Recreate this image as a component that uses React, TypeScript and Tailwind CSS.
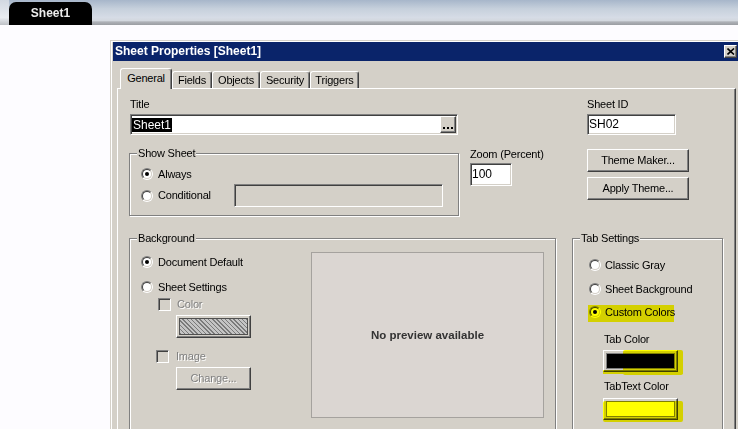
import React from "react";

const raised =
  "border border-t-white border-l-white border-b-[#404040] border-r-[#404040] shadow-[inset_-1px_-1px_0_#808080]";
const sunken =
  "border border-t-[#808080] border-l-[#808080] border-b-white border-r-white shadow-[inset_1px_1px_0_#404040,inset_-1px_-1px_0_#d4d0c8]";
const disabledText = "text-[#808080] [text-shadow:1px_1px_0_#ffffff]";

function Radio({ checked = false }: { checked?: boolean }) {
  return (
    <span className="flex h-[12px] w-[12px] shrink-0 items-center justify-center rounded-full border border-t-[#808080] border-l-[#808080] border-b-white border-r-white">
      <span className="flex h-[10px] w-[10px] items-center justify-center rounded-full border border-t-[#404040] border-l-[#404040] border-b-[#d4d0c8] border-r-[#d4d0c8] bg-white">
        {checked && <span className="h-[4px] w-[4px] rounded-full bg-black" />}
      </span>
    </span>
  );
}

function Check() {
  return <span className={`block h-[13px] w-[13px] shrink-0 bg-[#d4d0c8] ${sunken}`} />;
}

function Group({
  label,
  className,
  children,
}: {
  label: string;
  className: string;
  children?: React.ReactNode;
}) {
  return (
    <div
      className={`relative border border-[#808080] shadow-[inset_1px_1px_0_#ffffff,1px_1px_0_#ffffff] ${className}`}
    >
      <div className="-mt-[7px] ml-[7px] w-fit bg-[#d4d0c8] px-[1px] leading-[13px]">{label}</div>
      {children}
    </div>
  );
}

function Tab({ label, w, selected = false }: { label: string; w: string; selected?: boolean }) {
  return (
    <div
      className={`flex items-center justify-center rounded-t-[3px] border-t border-l border-r border-t-white border-l-white border-r-[#404040] shadow-[inset_-1px_0_0_#808080] ${w} ${
        selected ? "relative z-10 -mb-[1px] h-[21px] bg-[#d4d0c8] pb-[1px]" : "h-[17px]"
      }`}
    >
      {label}
    </div>
  );
}

function Button({ label, w, h, className = "" }: { label: string; w: string; h: string; className?: string }) {
  return (
    <div className={`flex items-center justify-center bg-[#d4d0c8] ${raised} ${w} ${h} ${className}`}>{label}</div>
  );
}

export default function App() {
  return (
    <div className="h-[429px] w-[738px] overflow-hidden bg-[#fdfcff] text-[11px] leading-[13px] tracking-[-0.2px] text-black [font-family:'Liberation_Sans',Arial,sans-serif]">
      {/* sheet tab bar */}
      <div className="flex h-[25px] bg-[linear-gradient(to_bottom,#a7b6ca_0%,#c6d0dc_35%,#d6dce6_70%,#d3d8df_82%,#aeb1b7_88%,#9a9da2_100%)]">
        <div className="w-[9px] bg-[linear-gradient(to_bottom,#d2d8e1,#e9ecf1_70%,#bdc0c5)]" />
        <div className="mt-[2px] flex h-[23px] w-[83px] items-center justify-center rounded-t-[7px] bg-black text-[12px] font-bold tracking-normal text-[#ececec]">
          Sheet1
        </div>
      </div>

      {/* dialog */}
      <div className="ml-[110px] mt-[15px] w-[632px] border-l border-t border-[#d4d0c8] bg-[#d4d0c8]">
        <div className="border-l border-t border-white pl-[1px]">
          {/* title bar */}
          <div className="flex h-[19px] items-center bg-[#0a246a] pl-[2px]">
            <span className="text-[12px] font-bold tracking-normal text-white">Sheet Properties [Sheet1]</span>
            <div className={`ml-auto mr-[5px] flex h-[13px] w-[13px] items-center justify-center bg-[#d4d0c8] ${raised}`}>
              <svg width="8" height="7" viewBox="0 0 8 7">
                <path d="M0.5 0.5 L7 6.5 M7 0.5 L0.5 6.5" stroke="#000" strokeWidth="1.6" fill="none" />
              </svg>
            </div>
          </div>

          {/* tab strip */}
          <div className="flex h-[27px] items-end pl-[7px]">
            <Tab label="General" w="w-[52px]" selected />
            <Tab label="Fields" w="w-[40px]" />
            <Tab label="Objects" w="w-[48px]" />
            <Tab label="Security" w="w-[50px]" />
            <Tab label="Triggers" w="w-[49px]" />
          </div>

          {/* panel */}
          <div className="ml-[4px] h-[360px] w-[619px] border-l border-t border-r border-l-white border-t-white border-r-[#404040] pl-[11px] pt-[9px] shadow-[inset_-1px_0_0_#808080]">
            {/* row 1 */}
            <div className="flex">
              <div className="ml-[1px] w-[329px]">
                <div>Title</div>
                <div className={`mt-[3px] flex h-[21px] w-[328px] items-center bg-white pl-[1px] pr-[1px] text-[12px] tracking-normal ${sunken}`}>
                  <span className="bg-black px-[1px] leading-[14px] text-white">Sheet1</span>
                  <div className={`ml-auto flex h-[17px] w-[16px] items-end justify-center gap-[2px] bg-[#d4d0c8] pb-[3px] ${raised}`}>
                    <span className="h-[2px] w-[2px] bg-black" />
                    <span className="h-[2px] w-[2px] bg-black" />
                    <span className="h-[2px] w-[2px] bg-black" />
                  </div>
                </div>
              </div>
              <div className="ml-[128px]">
                <div>Sheet ID</div>
                <div className={`mt-[3px] flex h-[21px] w-[89px] items-center bg-white pl-[1px] text-[12px] tracking-normal ${sunken}`}>SH02</div>
              </div>
            </div>

            {/* row 2 */}
            <div className="flex items-start">
              <Group label="Show Sheet" className="mt-[18px] h-[63px] w-[330px]">
                <div className="ml-[11px] mt-[8px] flex h-[12px] items-center gap-[5px]">
                  <Radio checked />
                  <span>Always</span>
                </div>
                <div className="ml-[11px] mt-[4px] flex h-[23px] items-center">
                  <Radio />
                  <span className="ml-[5px] w-[76px]">Conditional</span>
                  <div className={`h-[23px] w-[209px] bg-[#d4d0c8] ${sunken}`} />
                </div>
              </Group>

              <div className="ml-[11px] mt-[13px] w-[117px]">
                <div>Zoom (Percent)</div>
                <div className={`mt-[2px] flex h-[23px] w-[42px] items-center bg-white pl-[1px] text-[12px] tracking-normal ${sunken}`}>100</div>
              </div>

              <div className="mt-[14px] flex flex-col gap-[5px]">
                <Button label="Theme Maker..." w="w-[102px]" h="h-[23px]" />
                <Button label="Apply Theme..." w="w-[102px]" h="h-[23px]" />
              </div>
            </div>

            {/* row 3 */}
            <div className="flex items-start">
              <Group label="Background" className="mt-[22px] h-[200px] w-[427px]">
                <div className="flex">
                  <div className="w-[181px]">
                    <div className="ml-[11px] mt-[11px] flex h-[12px] items-center gap-[5px]">
                      <Radio checked />
                      <span>Document Default</span>
                    </div>
                    <div className="ml-[11px] mt-[13px] flex h-[12px] items-center gap-[5px]">
                      <Radio />
                      <span>Sheet Settings</span>
                    </div>
                    <div className="ml-[28px] mt-[5px] flex h-[13px] items-center gap-[6px]">
                      <Check />
                      <span className={disabledText}>Color</span>
                    </div>
                    <div className={`ml-[46px] mt-[4px] flex h-[23px] w-[75px] bg-[#d4d0c8] p-[2px] ${raised}`}>
                      <div className="h-full w-full border border-[#505050] bg-[repeating-linear-gradient(45deg,#7a7a7a_0px,#7a7a7a_1px,#c4c4c4_1px,#c4c4c4_3px)]" />
                    </div>
                    <div className="ml-[26px] mt-[12px] flex h-[13px] items-center gap-[7px]">
                      <Check />
                      <span className={disabledText}>Image</span>
                    </div>
                    <Button label="Change..." w="w-[75px]" h="h-[23px]" className={`ml-[46px] mt-[4px] ${disabledText}`} />
                  </div>
                  <div className="mt-[7px] flex h-[166px] w-[233px] items-center justify-center border border-[#a5a29e] bg-[#dbd6d2] text-[11.5px] font-bold tracking-normal text-[#333333]">
                    No preview available
                  </div>
                </div>
              </Group>

              <Group label="Tab Settings" className="ml-[16px] mt-[22px] h-[200px] w-[151px]">
                <div className="ml-[16px] mt-[14px] flex h-[12px] items-center gap-[4px]">
                  <Radio />
                  <span>Classic Gray</span>
                </div>
                <div className="ml-[16px] mt-[12px] flex h-[12px] items-center gap-[4px]">
                  <Radio />
                  <span>Sheet Background</span>
                </div>
                <div className="ml-[16px] mt-[11px] flex h-[12px] items-center gap-[4px]">
                  <Radio checked />
                  <span>Custom Colors</span>
                </div>
                <div className="ml-[31px] mt-[15px]">Tab Color</div>
                <div className={`ml-[30px] mt-[4px] flex h-[22px] w-[75px] bg-[#d4d0c8] p-[2px] ${raised}`}>
                  <div className="h-full w-full border border-[#808080] bg-black" />
                </div>
                <div className="ml-[31px] mt-[8px]">TabText Color</div>
                <div className={`ml-[30px] mt-[5px] flex h-[22px] w-[75px] bg-[#d4d0c8] p-[2px] ${raised}`}>
                  <div className="h-full w-full border border-[#808080] bg-[#ffff00]" />
                </div>

                {/* highlighter marks */}
                <div className="pointer-events-none absolute left-[15px] top-[66px] h-[17px] w-[86px] bg-[#ffff00] mix-blend-multiply" />
                <div className="pointer-events-none absolute left-[50px] top-[111px] h-[25px] w-[60px] rounded-[2px] bg-[#ffff00] mix-blend-multiply" />
                <div className="pointer-events-none absolute left-[30px] top-[131px] h-[4px] w-[80px] bg-[#ffff00] mix-blend-multiply" />
                <div className="pointer-events-none absolute left-[30px] top-[162px] h-[21px] w-[80px] rounded-[2px] bg-[#ffff00] mix-blend-multiply" />
              </Group>
            </div>
          </div>
        </div>
      </div>
    </div>
  );
}
